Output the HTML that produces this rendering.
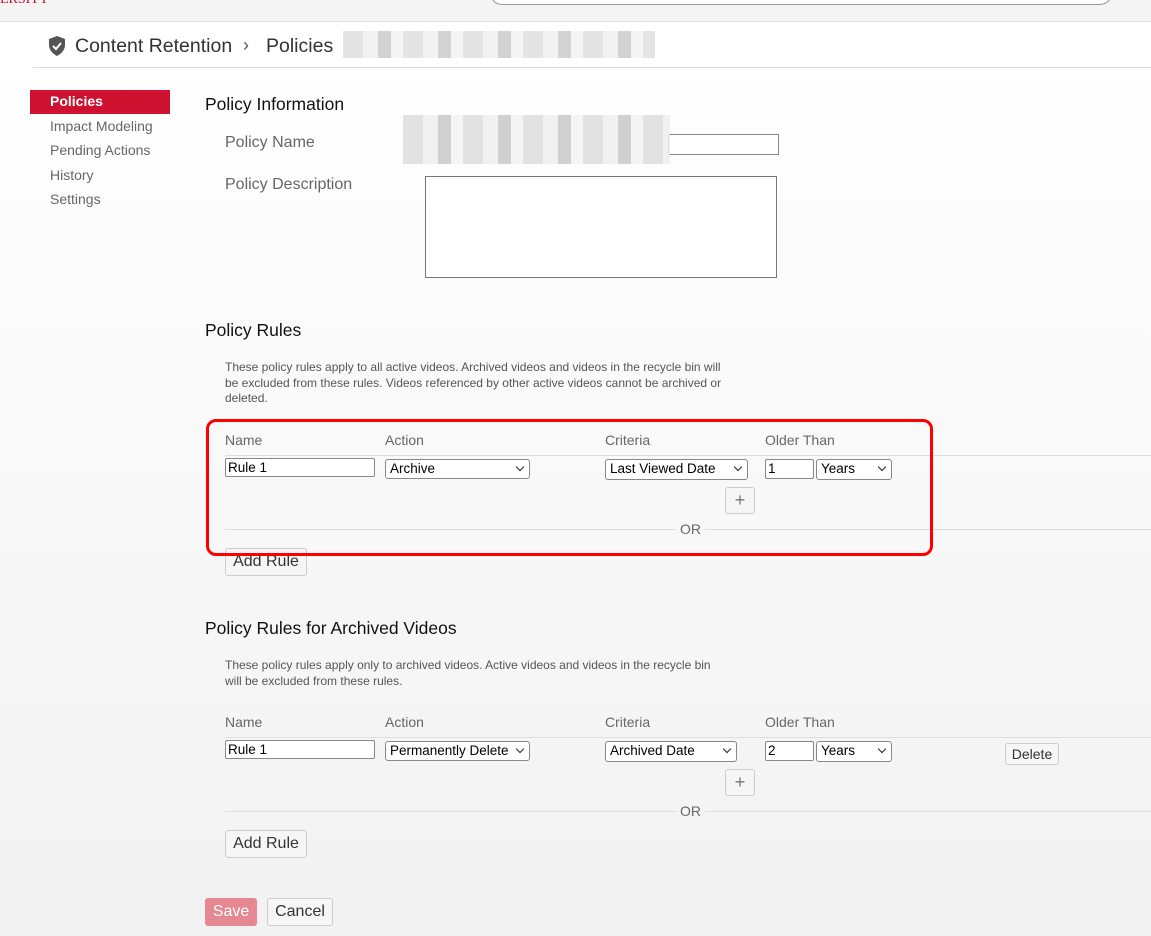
<!DOCTYPE html>
<html><head><style>
*{box-sizing:border-box}
body{margin:0;width:1151px;height:936px;overflow:hidden;font-family:"Liberation Sans",Arial,sans-serif;background:linear-gradient(#fff 60px,#fbfbfb 300px,#f2f2f2 936px);position:relative;color:#222}
.a{position:absolute;white-space:nowrap}
.top{left:0;top:0;width:1151px;height:22px;background:#f4f4f4;border-bottom:1px solid #e2e2e2}
.search{left:490px;top:-20px;width:622px;height:25px;border:1px solid #999;border-radius:12px;background:#fff}
.lbl{font-size:16px;color:#666}
.h{font-size:17.5px;color:#111}
.nav{font-size:14px;color:#666}
.th{font-size:14px;color:#666}
.inp{height:19px;border:1px solid #888;background:#fff;font-size:13.5px;padding:1px 2px;color:#000;border-radius:2px}
.sel{height:20px;border:1px solid #888;background:#fff;font-size:13.5px;padding:1px 4px;color:#000;border-radius:3px}
.sel:after{content:"";position:absolute;right:6px;top:4px;width:5px;height:5px;border-right:1.6px solid #222;border-bottom:1.6px solid #222;transform:rotate(45deg)}
.btn{border:1px solid #ccc;border-radius:3px;background:#f6f6f6;color:#333;text-align:center}
.line{height:1px;background:#ddd}
.small{font-size:12px;color:#555;line-height:15.5px}
.blur{background:repeating-linear-gradient(90deg,#ddd 0 20px,#eee 20px 35px,#c8c8c8 35px 48px,#f2f2f2 48px 60px)}
</style></head><body>
<div class="a top"></div>
<div class="a search"></div>
<div class="a" style="left:0;top:-8px;font-family:'Liberation Serif',serif;color:#c8102e;font-size:14px">ERSITY</div>
<svg class="a" style="left:47px;top:35px" width="20" height="22" viewBox="0 0 20 22"><path d="M10 1 L18 4 V10 C18 15 14 19 10 21 C6 19 2 15 2 10 V4 Z" fill="#555"/><path d="M6 11 L9 14 L14 8" stroke="#fff" stroke-width="2" fill="none"/></svg>
<div class="a" style="left:75px;top:35px;font-size:19.5px;color:#333">Content Retention</div>
<div class="a" style="left:243px;top:35px;font-size:18px;color:#555">›</div>
<div class="a" style="left:266px;top:35px;font-size:19.5px;color:#333">Policies</div>
<div class="a blur" style="left:343px;top:31px;width:312px;height:27px;opacity:.8"></div>
<div class="a line" style="left:33px;top:67px;width:1118px"></div>
<div class="a" style="left:30px;top:90px;width:140px;height:24px;background:#cf1130"></div>
<div class="a" style="left:50px;top:93px;font-size:14px;color:#fff;font-weight:bold">Policies</div>
<div class="a nav" style="left:50px;top:118px">Impact Modeling</div>
<div class="a nav" style="left:50px;top:142px">Pending Actions</div>
<div class="a nav" style="left:50px;top:167px">History</div>
<div class="a nav" style="left:50px;top:191px">Settings</div>

<div class="a h" style="left:205px;top:94px">Policy Information</div>
<div class="a lbl" style="left:225px;top:134px">Policy Name</div>
<div class="a" style="left:668px;top:134px;width:111px;height:21px;border:1px solid #888;background:#fff"></div>
<div class="a blur" style="left:403px;top:115px;width:267px;height:49px;opacity:.85"></div>
<div class="a lbl" style="left:225px;top:176px">Policy Description</div>
<div class="a" style="left:425px;top:176px;width:352px;height:102px;border:1px solid #777;background:#fff"></div>

<div class="a h" style="left:205px;top:320px">Policy Rules</div>
<div class="a small" style="left:225px;top:360px">These policy rules apply to all active videos. Archived videos and videos in the recycle bin will<br>be excluded from these rules. Videos referenced by other active videos cannot be archived or<br>deleted.</div>
<div class="a th" style="left:225px;top:432px">Name</div>
<div class="a th" style="left:385px;top:432px">Action</div>
<div class="a th" style="left:605px;top:432px">Criteria</div>
<div class="a th" style="left:765px;top:432px">Older Than</div>
<div class="a line" style="left:225px;top:455px;width:926px"></div>
<div class="a inp" style="left:225px;top:458px;width:150px">Rule 1</div>
<div class="a sel" style="left:385px;top:459px;width:145px">Archive</div>
<div class="a sel" style="left:605px;top:459px;width:143px;height:21px">Last Viewed Date</div>
<div class="a inp" style="left:765px;top:459px;width:49px;height:20px">1</div>
<div class="a sel" style="left:816px;top:459px;width:76px;height:21px">Years</div>
<div class="a btn" style="left:725px;top:487px;width:30px;height:27px;font-size:18px;line-height:25px;color:#777">+</div>
<div class="a line" style="left:225px;top:529px;width:451px"></div>
<div class="a" style="left:680px;top:521px;font-size:14px;color:#666">OR</div>
<div class="a line" style="left:705px;top:529px;width:446px"></div>
<div class="a btn" style="left:225px;top:548px;width:82px;height:28px;font-size:16px;line-height:26px">Add Rule</div>
<div class="a" style="left:206px;top:419px;width:727px;height:137px;border:3px solid #f00;border-radius:10px"></div>

<div class="a h" style="left:205px;top:618px">Policy Rules for Archived Videos</div>
<div class="a small" style="left:225px;top:658px">These policy rules apply only to archived videos. Active videos and videos in the recycle bin<br>will be excluded from these rules.</div>
<div class="a th" style="left:225px;top:714px">Name</div>
<div class="a th" style="left:385px;top:714px">Action</div>
<div class="a th" style="left:605px;top:714px">Criteria</div>
<div class="a th" style="left:765px;top:714px">Older Than</div>
<div class="a line" style="left:225px;top:737px;width:926px"></div>
<div class="a inp" style="left:225px;top:740px;width:150px">Rule 1</div>
<div class="a sel" style="left:385px;top:741px;width:145px">Permanently Delete</div>
<div class="a sel" style="left:605px;top:741px;width:132px;height:21px">Archived Date</div>
<div class="a inp" style="left:765px;top:741px;width:49px;height:20px">2</div>
<div class="a sel" style="left:816px;top:741px;width:76px;height:21px">Years</div>
<div class="a btn" style="left:1005px;top:743px;width:54px;height:22px;font-size:14px;line-height:20px">Delete</div>
<div class="a btn" style="left:725px;top:769px;width:30px;height:27px;font-size:18px;line-height:25px;color:#777">+</div>
<div class="a line" style="left:225px;top:811px;width:451px"></div>
<div class="a" style="left:680px;top:803px;font-size:14px;color:#666">OR</div>
<div class="a line" style="left:705px;top:811px;width:446px"></div>
<div class="a btn" style="left:225px;top:830px;width:82px;height:28px;font-size:16px;line-height:26px">Add Rule</div>

<div class="a" style="left:205px;top:898px;width:52px;height:28px;background:#e58891;border-radius:3px;color:#fff;font-size:16px;line-height:28px;text-align:center">Save</div>
<div class="a btn" style="left:267px;top:898px;width:66px;height:28px;font-size:16px;line-height:26px">Cancel</div>
</body></html>
